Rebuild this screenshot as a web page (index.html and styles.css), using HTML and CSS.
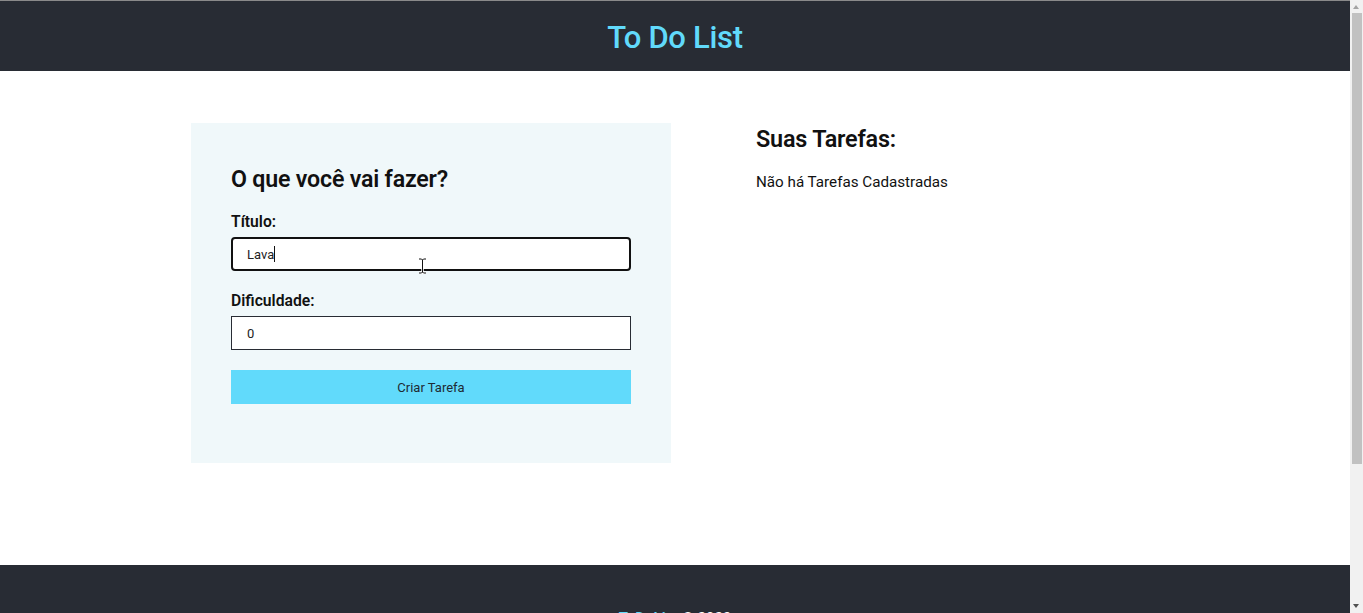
FILE: index.html
```html
<!DOCTYPE html>
<html lang="pt-BR">
<head>
<meta charset="utf-8">
<title>To Do List</title>
<link rel="stylesheet" href="styles.css">
</head>
<body>
<header class="header">
  <h1 class="header-title">To Do List</h1>
</header>
<main class="main">
  <div class="container">
    <section class="form-card">
      <h2 class="form-title">O que você vai fazer?</h2>
      <form class="form">
        <label class="label" for="title">Título:</label>
        <div class="input-wrap">
          <input id="title" class="input input-focused" type="text" value="Lava">
          <span class="fake-caret"></span>
          <svg class="mouse-cursor" width="9" height="16" viewBox="0 0 9 16">
            <path d="M1 1h2.5l1 1 1-1H8M4.5 2v12M1 15h2.5l1-1 1 1H8" fill="none" stroke="#fff" stroke-width="2.5"/>
            <path d="M1 1h2.5l1 1 1-1H8M4.5 2v12M1 15h2.5l1-1 1 1H8" fill="none" stroke="#111" stroke-width="1"/>
          </svg>
        </div>
        <label class="label" for="diff">Dificuldade:</label>
        <input id="diff" class="input" type="text" value="0">
        <button type="button" class="button">Criar Tarefa</button>
      </form>
    </section>
    <section class="tasks">
      <h2 class="tasks-title">Suas Tarefas:</h2>
      <p class="tasks-empty">Não há Tarefas Cadastradas</p>
    </section>
  </div>
</main>
<footer class="footer">
  <p class="footer-text"><span class="footer-brand">ToDoList</span> © 2023</p>
</footer>
<div class="scrollbar" aria-hidden="true">
  <span class="scroll-arrow scroll-up"></span>
  <span class="scroll-thumb"></span>
  <span class="scroll-arrow scroll-down"></span>
</div>
</body>
</html>
```

FILE: styles.css
```css
* { box-sizing: border-box; }
html, body { margin: 0; padding: 0; }
body {
  font-family: Roboto, "Liberation Sans", sans-serif;
  color: #111;
  background: #fff;
  margin-right: 13px;
  border-top: 1px solid #8a8a8a;
}
.header {
  background: #282c34;
  height: 70px;
  display: flex;
  align-items: center;
  justify-content: center;
}
.header-title {
  margin: 0;
  color: #61dafb;
  font-size: 31px;
  font-weight: 500;
  letter-spacing: -0.3px;
  padding-top: 2px;
}
.main {
  padding: 52px 0 102px;
}
.container {
  width: 968px;
  margin: 0 auto;
  display: flex;
  align-items: flex-start;
}
.form-card {
  width: 480px;
  background: #f0f8fa;
  padding: 40px 40px 59px;
}
.form-title {
  margin: 0 0 17px;
  font-size: 23.2px;
  font-weight: 600;
  line-height: 32px;
  letter-spacing: -0.2px;
}
.form { display: flex; flex-direction: column; }
.label {
  font-size: 15.7px;
  font-weight: 600;
  line-height: 20px;
  margin-bottom: 5px;
}
.input-wrap { position: relative; margin-bottom: 20px; }
.input {
  width: 400px;
  height: 34px;
  border: 1px solid #282c34;
  background: #fff;
  padding: 0 15px;
  font-family: Roboto, "Liberation Sans", sans-serif;
  font-size: 13px;
  color: #222;
  outline: none;
  margin: 0 0 20px;
}
.input-wrap .input { margin: 0; }
.input-focused {
  border: 2px solid #111;
  border-radius: 4px;
  padding: 0 14px;
}
.fake-caret {
  position: absolute;
  left: 43px;
  top: 9px;
  width: 1px;
  height: 16px;
  background: #111;
}
.mouse-cursor {
  position: absolute;
  left: 187px;
  top: 21px;
}
.button {
  width: 400px;
  height: 34px;
  border: none;
  background: #61dafb;
  color: #1e2a33;
  font-family: Roboto, "Liberation Sans", sans-serif;
  font-size: 13px;
  cursor: pointer;
}
.tasks { margin-left: 85px; padding-top: 1px; }
.tasks-title {
  margin: 0 0 18px;
  font-size: 23.4px;
  font-weight: 600;
  line-height: 30px;
  letter-spacing: -0.2px;
}
.tasks-empty {
  margin: 0;
  font-size: 15.2px;
  line-height: 20px;
}
.footer {
  background: #282c34;
  height: 233px;
  padding-top: 43px;
  display: flex;
  justify-content: center;
  align-items: flex-start;
}
.footer-text {
  margin: 0;
  color: #fff;
  font-size: 15px;
  line-height: 20px;
}
.footer-brand { color: #61dafb; font-weight: 600; }
.scrollbar {
  position: fixed;
  top: 0;
  right: 0;
  width: 13px;
  height: 100vh;
  background: #f1f1f1;
}
.scroll-thumb {
  position: absolute;
  left: 2px;
  right: 1px;
  top: 13px;
  height: 451px;
  background: #c1c1c1;
}
.scroll-arrow {
  position: absolute;
  left: 3px;
  width: 0;
  height: 0;
  border-left: 3.5px solid transparent;
  border-right: 3.5px solid transparent;
}
.scroll-up { top: 5px; border-bottom: 4px solid #a3a3a3; }
.scroll-down { bottom: 5px; border-top: 4px solid #505050; }
```
